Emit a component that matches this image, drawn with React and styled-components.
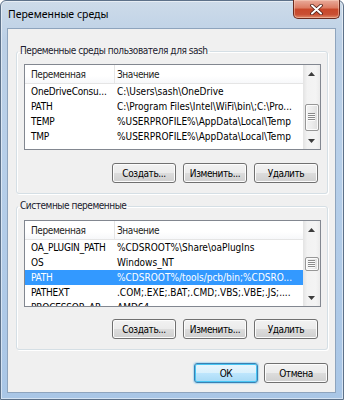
import React from "react";
import styled, { createGlobalStyle } from "styled-components";

const UI_FONT = `"DejaVu Sans Condensed", "Liberation Sans", Arial, sans-serif`;

const Global = createGlobalStyle`
  html, body { margin: 0; padding: 0; }
  body {
    width: 344px; height: 400px; overflow: hidden; background: #fff;
    font-family: ${UI_FONT}; font-size: 10px; color: #000;
  }
`;

const Window = styled.div`
  box-sizing: border-box;
  width: 344px;
  height: 400px;
  display: flex;
  flex-direction: column;
  padding: 0 7px 6px 6px;
  border: 1px solid #5d7189;
  border-radius: 6px 6px 0 0;
  background: linear-gradient(180deg, #cddbe9 0%, #bcd0e6 10%, #b7cfe9 40%, #a9c6e6 100%);
  box-shadow: inset 0 0 0 1px rgba(255, 255, 255, 0.5);
`;

const TitleBar = styled.div`
  height: 27px;
  flex: none;
  display: flex;
  justify-content: space-between;
  align-items: flex-start;
`;

const Title = styled.span`
  font-family: "Noto Sans", "Liberation Sans", sans-serif;
  font-size: 10.5px;
  line-height: 16px;
  margin-top: 5px;
  margin-left: 1px;
  color: #000;
`;

const CloseButton = styled.div`
  box-sizing: border-box;
  width: 47px;
  height: 19px;
  margin-top: -1px;
  margin-right: -4px;
  display: flex;
  align-items: center;
  justify-content: center;
  border: 1px solid #6a2a1e;
  border-top: none;
  border-radius: 0 0 5px 5px;
  background: linear-gradient(180deg, #e9ab9b 0%, #dc7a61 45%, #c8472a 50%, #c94f33 80%, #e08a6a 100%);
  box-shadow: inset 0 0 0 1px rgba(255, 220, 200, 0.45);
`;

const Client = styled.div`
  flex: 1;
  display: flex;
  flex-direction: column;
  background: #f0f0f0;
  border: 1px solid #8ea4bd;
  padding: 15px 7px 0 8px;
`;

const GroupBox = styled.fieldset`
  margin: ${(p) => p.$mt}px 0 0 0;
  min-width: 0;
  border: 1px solid #d5dfe5;
  border-radius: 3px;
  box-shadow: inset 1px 1px 0 #fff, 1px 1px 0 #fff;
  padding: ${(p) => p.$pt}px 6px 10px 7px;
  display: flex;
  flex-direction: column;
  gap: ${(p) => p.$gap}px;
`;

const Legend = styled.legend`
  padding: 0 2px;
  margin-left: -6px;
  line-height: 14px;
  font-size: 10px;
  letter-spacing: -0.45px;
  color: #1b1b2e;
`;

const List = styled.div`
  box-sizing: border-box;
  height: ${(p) => p.$h}px;
  border: 1px solid #828790;
  background: #fff;
  display: flex;
`;

const ListMain = styled.div`
  flex: 1;
  min-width: 0;
  display: flex;
  flex-direction: column;
  overflow: hidden;
`;

const Header = styled.div`
  flex: none;
  display: grid;
  grid-template-columns: 90px 1fr;
  height: 18px;
  border-bottom: 1px solid #e5e5e5;
  background: linear-gradient(180deg, #ffffff 0%, #ffffff 60%, #f7f8fa 100%);
`;

const HeaderCell = styled.div`
  display: flex;
  align-items: center;
  padding-left: ${(p) => (p.$first ? 6 : 2)}px;
  border-right: ${(p) => (p.$first ? "1px solid #e5e5e5" : "none")};
  color: #1e1e1e;
  letter-spacing: -0.4px;
  white-space: nowrap;
`;

const Row = styled.div`
  flex: none;
  display: grid;
  grid-template-columns: 90px 1fr;
  height: 15px;
  background: ${(p) => (p.$sel ? "#3399ff" : "transparent")};
  color: ${(p) => (p.$sel ? "#fff" : "#000")};
`;

const Cell = styled.div`
  display: flex;
  align-items: center;
  padding-left: ${(p) => (p.$first ? 6 : 2)}px;
  letter-spacing: ${(p) => (p.$first ? "-0.2px" : "0")};
  white-space: nowrap;
  min-width: 0;
`;

const ScrollBar = styled.div`
  flex: none;
  width: 17px;
  display: flex;
  flex-direction: column;
  background: linear-gradient(90deg, #e3e3e3 0%, #f2f2f2 25%, #f4f4f4 75%, #ebebeb 100%);
`;

const ArrowButton = styled.div`
  flex: none;
  height: 17px;
  display: flex;
  align-items: center;
  justify-content: center;
`;

const Track = styled.div`
  flex: 1;
  display: flex;
  flex-direction: column;
  align-items: center;
`;

const Thumb = styled.div`
  box-sizing: border-box;
  width: 14px;
  height: ${(p) => p.$h}px;
  margin-top: ${(p) => p.$top}px;
  border: 1px solid #979797;
  border-radius: 2px;
  background: linear-gradient(90deg, #f3f3f3 0%, #ececec 50%, #dedede 100%);
  box-shadow: inset 0 0 0 1px rgba(255, 255, 255, 0.8);
  display: flex;
  align-items: center;
  justify-content: center;
`;

const ButtonRow = styled.div`
  display: flex;
  justify-content: flex-end;
  gap: 7px;
  padding-right: 3px;
`;

const Button = styled.button`
  box-sizing: border-box;
  width: 64px;
  height: 20px;
  padding: 0;
  font-family: ${UI_FONT};
  font-size: 10px;
  letter-spacing: -0.4px;
  color: #000;
  border: 1px solid ${(p) => (p.$default ? "#3c7fb1" : "#707070")};
  border-radius: 3px;
  background: ${(p) =>
    p.$default
      ? "linear-gradient(180deg, #eaf6fd 0%, #d9f0fc 50%, #bee6fd 50%, #a7d9f5 100%)"
      : "linear-gradient(180deg, #f2f2f2 0%, #ebebeb 50%, #dddddd 50%, #cfcfcf 100%)"};
  box-shadow: ${(p) =>
    p.$default
      ? "inset 0 0 0 1px #48c6f4, 0 0 1px 1px rgba(120, 200, 240, 0.5)"
      : "inset 0 0 0 1px #fcfcfc"};
`;

const Footer = styled.div`
  display: flex;
  justify-content: flex-end;
  gap: 6px;
  margin-top: 13px;
`;

const UpArrow = () => (
  <svg width="7" height="4" viewBox="0 0 7 4">
    <polygon points="3.5,0 7,4 0,4" fill="#3c3c3c" />
  </svg>
);

const DownArrow = () => (
  <svg width="7" height="4" viewBox="0 0 7 4">
    <polygon points="0,0 7,0 3.5,4" fill="#3c3c3c" />
  </svg>
);

const Grip = ({ lines }) => (
  <svg width="7" height={lines * 2 + 1} viewBox={`0 0 7 ${lines * 2 + 1}`}>
    {Array.from({ length: lines }).map((_, i) => (
      <g key={i}>
        <rect x="0" y={i * 2} width="7" height="1" fill="#8a8a8a" />
        <rect x="0" y={i * 2 + 1} width="7" height="1" fill="#fbfbfb" />
      </g>
    ))}
  </svg>
);

const CloseIcon = () => (
  <svg width="13" height="11" viewBox="0 0 13 11">
    <path d="M2 1.5 L11 9.5 M11 1.5 L2 9.5" stroke="#4a1a12" strokeWidth="3.6" strokeLinecap="round" />
    <path d="M2 1.5 L11 9.5 M11 1.5 L2 9.5" stroke="#ffffff" strokeWidth="2" strokeLinecap="round" />
  </svg>
);

const VarList = ({ rows, height, thumbTop, thumbH, grip }) => (
  <List $h={height}>
    <ListMain>
      <Header>
        <HeaderCell $first>Переменная</HeaderCell>
        <HeaderCell>Значение</HeaderCell>
      </Header>
      {rows.map((r) => (
        <Row key={r[0]} $sel={r[2]}>
          <Cell $first>{r[0]}</Cell>
          <Cell>{r[1]}</Cell>
        </Row>
      ))}
    </ListMain>
    <ScrollBar>
      <ArrowButton>
        <UpArrow />
      </ArrowButton>
      <Track>
        <Thumb $top={thumbTop} $h={thumbH}>
          <Grip lines={grip} />
        </Thumb>
      </Track>
      <ArrowButton>
        <DownArrow />
      </ArrowButton>
    </ScrollBar>
  </List>
);

const userRows = [
  ["OneDriveConsu...", "C:\\Users\\sash\\OneDrive"],
  ["PATH", "C:\\Program Files\\Intel\\WiFi\\bin\\;C:\\Pro..."],
  ["TEMP", "%USERPROFILE%\\AppData\\Local\\Temp"],
  ["TMP", "%USERPROFILE%\\AppData\\Local\\Temp"],
];

const sysRows = [
  ["OA_PLUGIN_PATH", "%CDSROOT%\\Share\\oaPlugIns"],
  ["OS", "Windows_NT"],
  ["PATH", "%CDSROOT%/tools/pcb/bin;%CDSRO...", true],
  ["PATHEXT", ".COM;.EXE;.BAT;.CMD;.VBS;.VBE;.JS;...."],
  ["PROCESSOR_AR...", "AMD64"],
];

export default function App() {
  return (
    <>
      <Global />
      <Window>
        <TitleBar>
          <Title>Переменные среды</Title>
          <CloseButton>
            <CloseIcon />
          </CloseButton>
        </TitleBar>
        <Client>
          <GroupBox $mt={0} $pt={6} $gap={13}>
            <Legend>Переменные среды пользователя для sash</Legend>
            <VarList rows={userRows} height={86} thumbTop={22} thumbH={27} grip={4} />
            <ButtonRow>
              <Button>Создать...</Button>
              <Button>Изменить...</Button>
              <Button>Удалить</Button>
            </ButtonRow>
          </GroupBox>
          <GroupBox $mt={5} $pt={7} $gap={12}>
            <Legend>Системные переменные</Legend>
            <VarList rows={sysRows} height={87} thumbTop={19} thumbH={14} grip={4} />
            <ButtonRow>
              <Button>Создать...</Button>
              <Button>Изменить...</Button>
              <Button>Удалить</Button>
            </ButtonRow>
          </GroupBox>
          <Footer>
            <Button $default>ОК</Button>
            <Button>Отмена</Button>
          </Footer>
        </Client>
      </Window>
    </>
  );
}
